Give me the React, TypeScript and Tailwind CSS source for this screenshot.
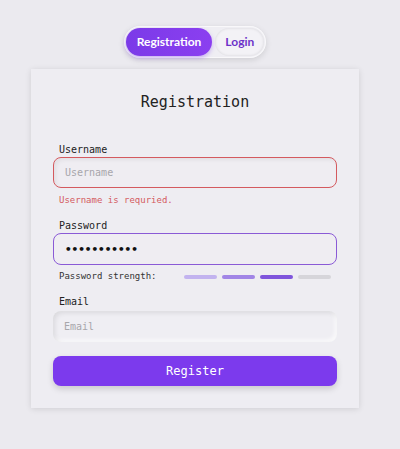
import { useState } from 'react';

const mono = { fontFamily: '"DejaVu Sans Mono", "Liberation Mono", monospace' };
const sans = { fontFamily: 'Lato, "Noto Sans", sans-serif' };

export default function App() {
  const [tab, setTab] = useState<'register' | 'login'>('register');

  return (
    <div className="min-h-[449px] w-[400px] bg-[#ebeaef] pt-[26px] flex flex-col items-center pr-[10px]" style={mono}>
      <div className="flex gap-[3px] p-[2px] rounded-full bg-[#efeef3] shadow-[0_2px_6px_rgba(0,0,0,0.12),inset_0_0_0_1px_rgba(255,255,255,0.6)]">
        <button
          onClick={() => setTab('register')}
          className="h-[28px] px-[11px] rounded-full bg-gradient-to-r from-[#7b3ae8] to-[#8b3ff0] text-white text-[12px] font-bold shadow-[0_2px_4px_rgba(124,58,237,0.35)]"
          style={sans}
        >
          Registration
        </button>
        <button
          onClick={() => setTab('login')}
          className="h-[28px] px-[10px] rounded-full bg-[#f3f2f6] text-[#6d32c9] text-[12px] font-bold shadow-[inset_0_0_3px_rgba(0,0,0,0.12)]"
          style={sans}
        >
          Login
        </button>
      </div>

      <div className="mt-[11px] w-[328px] bg-[#eeedf2] shadow-[0_1px_6px_rgba(0,0,0,0.12)] px-[22px] pt-[22px] pb-[22px]">
        <h1 className="text-center text-[15px] text-[#222] mb-[28px]">Registration</h1>

        <label className="block text-[10px] text-[#222] pl-[6px]">Username</label>
        <input
          placeholder="Username"
          className="w-full h-[31px] rounded-[8px] border-[1.5px] border-[#d45a5f] bg-[#efedf2] px-[11px] text-[10px] placeholder-[#a7a6ab] outline-none shadow-[inset_2px_2px_4px_rgba(0,0,0,0.06)]"
          style={mono}
        />
        <p className="text-[9px] text-[#d45a5f] pl-[6px] mt-[6px]">Username is requried.</p>

        <label className="block text-[10px] text-[#222] pl-[6px] mt-[11px]">Password</label>
        <input
          type="password"
          defaultValue="passwordabc"
          className="w-full h-[32px] rounded-[8px] border-[1.5px] border-[#8a5ad6] bg-[#efedf2] px-[11px] text-[11px] font-bold text-[#111] outline-none"
          style={mono}
        />
        <div className="flex items-center mt-[5px] pl-[6px]">
          <span className="text-[9px] text-[#333] w-[125px]">Password strength:</span>
          <div className="flex gap-[5px]">
            <div className="w-[33px] h-[4px] rounded-full bg-[#c2b3ef]" />
            <div className="w-[33px] h-[4px] rounded-full bg-[#a185e6]" />
            <div className="w-[33px] h-[4px] rounded-full bg-[#7f55dc]" />
            <div className="w-[33px] h-[4px] rounded-full bg-[#d6d5da]" />
          </div>
        </div>

        <label className="block text-[10px] text-[#222] pl-[6px] mt-[10px] mb-[2px]">Email</label>
        <input
          placeholder="Email"
          className="w-full h-[31px] rounded-[8px] bg-[#efeef3] px-[11px] text-[10px] placeholder-[#a7a6ab] outline-none shadow-[inset_2px_2px_5px_rgba(0,0,0,0.09),inset_-2px_-2px_4px_rgba(255,255,255,0.8)]"
          style={mono}
        />

        <button className="mt-[14px] w-full h-[30px] rounded-[8px] bg-[#7c3aed] text-white text-[12px] shadow-[0_3px_6px_rgba(0,0,0,0.15)]" style={mono}>
          Register
        </button>
      </div>
    </div>
  );
}
